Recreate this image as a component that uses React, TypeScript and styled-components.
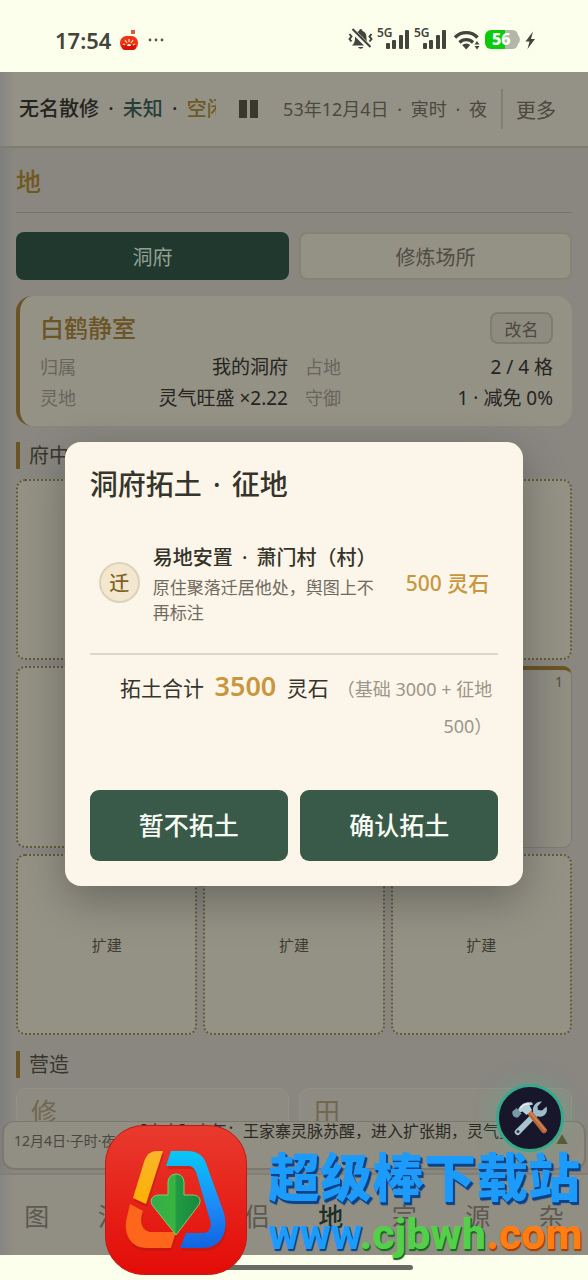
import React from "react";
import styled, { createGlobalStyle } from "styled-components";

const GlobalStyle = createGlobalStyle`
  * { box-sizing: border-box; }
  body {
    margin: 0;
    background: #fdffed;
    font-family: "Noto Sans", "Noto Sans CJK SC", sans-serif;
    text-spacing-trim: space-all;
  }
  button { font-family: inherit; cursor: pointer; padding: 0; }
  h1, h2, h3, p, dl, dd, dt { margin: 0; font-weight: inherit; }
`;

const Page = styled.div`
  position: relative;
  display: flex;
  flex-direction: column;
  height: 100vh;
  overflow: hidden;
`;

/* ---------- phone status bar ---------- */

const StatusBar = styled.div`
  flex: none;
  display: flex;
  align-items: center;
  justify-content: space-between;
  height: 72px;
  padding: 8px 52px 0 55px;
  color: #43443c;
`;

const StatusGroup = styled.div`
  display: flex;
  align-items: center;
  gap: 8px;
`;

const Clock = styled.span`
  font-size: 22px;
  font-weight: 600;
  line-height: 28px;
`;

const StatusIcons = styled.svg`
  display: block;
  width: 190px;
  height: 32px;
`;

/* ---------- game shell ---------- */

const Game = styled.main`
  position: relative;
  flex: 1;
  min-height: 0;
  display: flex;
  flex-direction: column;
  background: linear-gradient(90deg, #7f7f7d 0, #898780 14px, #898780 100%);
`;

const Header = styled.header`
  flex: none;
  display: flex;
  align-items: center;
  height: 76px;
  padding: 0 32px 0 19px;
  background: linear-gradient(90deg, #858583 0, #949186 14px);
  border-bottom: 2px solid #7f7c73;
  font-size: 20px;
  line-height: 28px;
  white-space: nowrap;
`;

const Identity = styled.div`
  flex: 1;
  overflow: hidden;
  color: #24241e;
  font-weight: 500;
`;

const Tint = styled.span<{ $color: string }>`
  color: ${(p) => p.$color};
`;

const Dot = styled.span`
  margin: 0 4px;
  &::before { content: "·"; }
`;

const PauseButton = styled.button`
  display: flex;
  gap: 3px;
  margin: 0 25px 0 23px;
  border: 0;
  background: none;
`;

const PauseStripe = styled.span`
  width: 8px;
  height: 18px;
  background: #3a382c;
`;

const DateText = styled.div`
  color: #4b493f;
  font-size: 18px;
`;

const MoreButton = styled.button`
  height: 40px;
  margin-left: 14px;
  padding-left: 13px;
  border: 0;
  border-left: 2px solid #817e74;
  background: none;
  color: #4b493f;
  font-size: 20px;
`;

const Content = styled.div`
  flex: 1;
  min-height: 0;
  overflow: hidden;
  padding: 0 16px;
`;

const PageTitle = styled.h1`
  height: 65px;
  padding-top: 15px;
  border-bottom: 1px solid #76746d;
  color: #71581f;
  font-size: 25px;
  font-weight: 500;
  line-height: 36px;
`;

const Pair = styled.div`
  display: grid;
  grid-template-columns: 1fr 1fr;
  gap: 10px;
`;

const Tabs = styled(Pair)`
  margin: 19px 0 16px;
`;

const Tab = styled.button<{ $active?: boolean }>`
  height: 48px;
  border: ${(p) => (p.$active ? "0" : "2px solid #868373")};
  border-radius: 8px;
  background: ${(p) => (p.$active ? "#21382e" : "#949185")};
  color: ${(p) => (p.$active ? "#92a095" : "#504c42")};
  font-size: 20px;
`;

const HomeCard = styled.section`
  padding: 14px 19px 12px 20px;
  border-left: 4px solid #6a5424;
  border-radius: 16px;
  background: #949185;
`;

const HomeHead = styled.div`
  display: flex;
  align-items: center;
  justify-content: space-between;
  height: 36px;
  margin-bottom: 6px;
`;

const HomeName = styled.h2`
  color: #6b5426;
  font-size: 24px;
  font-weight: 500;
  line-height: 36px;
`;

const RenameButton = styled.button`
  width: 63px;
  height: 32px;
  border: 2px solid #7f7c70;
  border-radius: 8px;
  background: #8e8b80;
  color: #4c493f;
  font-size: 17px;
`;

const Facts = styled.dl`
  display: grid;
  grid-template-columns: 1fr 1fr;
  column-gap: 17px;
`;

const Fact = styled.div`
  display: flex;
  justify-content: space-between;
  line-height: 31px;
  white-space: nowrap;
  dt { color: #68655c; font-size: 18px; }
  dd { color: #25241f; font-size: 19px; }
`;

const SectionTitle = styled.h2`
  height: 27px;
  margin: 16px 0 10px;
  padding-left: 9px;
  border-left: 4px solid #6a5424;
  color: #38362d;
  font-size: 20px;
  line-height: 27px;
`;

const Plots = styled.div`
  display: grid;
  grid-template-columns: repeat(3, 1fr);
  gap: 6px;
`;

const Plot = styled.button`
  aspect-ratio: 1;
  border: 2px dotted #625a38;
  border-radius: 9px;
  background: #949185;
  color: #3f3c33;
  font-size: 15px;
`;

const BuiltPlot = styled.button`
  display: flex;
  justify-content: flex-end;
  aspect-ratio: 1;
  padding: 2px 8px;
  border: 1px solid #7c796d;
  border-top: 4px solid #6a5424;
  border-radius: 9px;
  background: linear-gradient(90deg, #85847f 60%, #929083);
  color: #504d44;
  font-size: 14px;
  line-height: 20px;
`;

const BuildCard = styled.button`
  display: flex;
  align-items: flex-start;
  height: 90px;
  padding: 6px 14px;
  border: 1px solid #949186;
  border-radius: 10px;
  background: #8d8b82;
  color: #70684f;
  font-size: 26px;
  line-height: 34px;
`;

/* ---------- event log and bottom navigation ---------- */

const EventLog = styled.div`
  flex: none;
  display: flex;
  height: 49px;
  margin: 0 2px;
  padding: 0 16px 0 10px;
  overflow: hidden;
  border: 2px solid #7b786e;
  border-top-width: 1px;
  border-radius: 12px;
  background: #918e83;
  white-space: nowrap;
`;

const LogTime = styled.span`
  width: 117px;
  overflow: hidden;
  color: #4a473f;
  font-size: 14px;
  line-height: 38px;
`;

const LogText = styled.span`
  flex: 1;
  overflow: hidden;
  color: #2b2a24;
  font-size: 16px;
  line-height: 18px;
`;

const LogArrow = styled.span`
  width: 12px;
  color: #5c5228;
  font-size: 12px;
  line-height: 38px;
`;

const Nav = styled.nav`
  flex: none;
  display: grid;
  grid-template-columns: repeat(8, 1fr);
  height: 82px;
  margin-top: 3px;
  border-top: 2px solid #827f75;
  background: linear-gradient(90deg, #858583 0, #918e84 14px);
`;

const NavItem = styled.button<{ $active?: boolean }>`
  border: 0;
  background: none;
  color: ${(p) => (p.$active ? "#1c3027" : "#5c594f")};
  font-size: 25px;
  font-weight: ${(p) => (p.$active ? 500 : 400)};
`;

const HomeStrip = styled.div`
  flex: none;
  display: flex;
  justify-content: center;
  align-items: center;
  height: 25px;
`;

const HomeIndicator = styled.div`
  width: 238px;
  height: 5px;
  border-radius: 3px;
  background: #6a6b64;
`;

/* ---------- dialog ---------- */

const Overlay = styled.div`
  position: absolute;
  inset: 0;
  display: flex;
  align-items: center;
  justify-content: center;
`;

const Dialog = styled.section`
  width: 78%;
  padding: 24px 25px 25px;
  border-radius: 16px;
  background: #fcf5e9;
  box-shadow: 0 14px 44px rgba(0, 0, 0, 0.28);
  color: #36352b;
`;

const DialogTitle = styled.h2`
  font-size: 28px;
  font-weight: 500;
  line-height: 36px;
`;

const CostRow = styled.div`
  display: flex;
  align-items: center;
  gap: 13px;
  margin-top: 15px;
  padding: 24px 9px 28px;
  border-bottom: 2px solid #ddd6c8;
`;

const Badge = styled.span`
  flex: none;
  display: grid;
  place-items: center;
  width: 41px;
  height: 41px;
  border: 2px solid #dcd2b9;
  border-radius: 50%;
  background: #f3e8cf;
  color: #806124;
  font-size: 20px;
  font-weight: 500;
`;

const CostText = styled.div`
  flex: 1;
`;

const CostName = styled.h3`
  color: #34332a;
  font-size: 20px;
  font-weight: 500;
  line-height: 34px;
`;

const CostNote = styled.p`
  color: #706a60;
  font-size: 17px;
  line-height: 25px;
`;

const Price = styled.strong`
  margin-left: 10px;
  color: #c8973d;
  font-size: 21px;
  font-weight: 500;
  line-height: 28px;
  white-space: nowrap;
`;

const Total = styled.p`
  padding: 13px 6px 46px;
  font-size: 21px;
  line-height: 36px;
  text-align: right;
`;

const TotalSum = styled.strong`
  margin: 0 5px;
  color: #c8973d;
  font-size: 27px;
  font-weight: 600;
`;

const TotalNote = styled.span`
  margin-left: 8px;
  color: #9b958b;
  font-size: 18px;
`;

const Actions = styled.div`
  display: grid;
  grid-template-columns: 1fr 1fr;
  gap: 12px;
`;

const Action = styled.button`
  height: 71px;
  padding-bottom: 3px;
  border: 0;
  border-radius: 9px;
  background: #395a49;
  color: #f8fcf4;
  font-size: 25px;
  font-weight: 500;
`;

/* ---------- floating pieces ---------- */

const ToolButton = styled.button`
  position: absolute;
  right: 24px;
  bottom: 103px;
  width: 68px;
  height: 68px;
  border: 3px solid #35a98a;
  border-radius: 50%;
  background: #18162b;
  box-shadow: 0 0 24px rgba(70, 190, 150, 0.35);
  svg { display: block; margin: auto; }
`;

const Promo = styled.a`
  position: absolute;
  left: 105px;
  bottom: 5px;
  display: flex;
  gap: 21px;
  text-decoration: none;
  white-space: nowrap;
  svg { display: block; }
`;

const PromoText = styled.span`
  display: flex;
  flex-direction: column;
  padding-top: 20px;
  font-family: "Noto Sans CJK SC", sans-serif;
  font-weight: 900;
`;

const PromoName = styled.span`
  color: #1c9bfb;
  font-size: 52px;
  line-height: 60px;
  text-shadow: 1px 2px 0 #0b4187, 2px 3px 1px #0b4187;
`;

const PromoUrl = styled.span`
  font-family: Roboto, sans-serif;
  font-size: 43px;
  font-weight: 800;
  line-height: 58px;
`;

const UrlPart = styled.span<{ $color: string; $edge: string }>`
  color: ${(p) => p.$color};
  text-shadow: 1px 1px 0 ${(p) => p.$edge}, 1px 2px 1px ${(p) => p.$edge};
`;

const FruitIcon = () => (
  <svg width="20" height="22" viewBox="0 0 20 22" aria-hidden="true">
    <rect x="12" y="1" width="4" height="4" fill="#dd5a3a" />
    <rect x="1" y="7" width="18" height="14" rx="6.500" fill="#f2330f" />
    <path d="M3 16h14v2a3 3 0 0 1-3 3H6a3 3 0 0 1-3-3z" fill="#d5150b" />
    <path d="M4 15l2 1M6 11l2 3M10 10v3M14 11l-2 3M16 15l-2 1" stroke="#ffd9c0" strokeWidth="1.300" />
    <path d="M8 17a2 2 0 0 1 4 0z" fill="#fff0e4" />
  </svg>
);

const DotsIcon = () => (
  <svg width="18" height="4" viewBox="0 0 18 4" fill="#55564d" aria-hidden="true">
    <circle cx="3" cy="2" r="1.400" />
    <circle cx="9" cy="2" r="1.400" />
    <circle cx="15" cy="2" r="1.400" />
  </svg>
);

const Signal = ({ x }: { x: number }) => (
  <g>
    <text x={x} y="13" fontSize="12" fontWeight="600">5G</text>
    <rect x={x + 9} y="19" width="4" height="6" rx="1" />
    <rect x={x + 15} y="16" width="4" height="9" rx="1" />
    <rect x={x + 22} y="11" width="4" height="14" rx="1" />
    <rect x={x + 28} y="6" width="4" height="19" rx="1" />
  </g>
);

const SystemIcons = () => (
  <StatusIcons viewBox="0 0 190 32" fill="#43443c" role="img" aria-label="56%">
    <g transform="translate(2 -1)">
      <path d="M12.500 6a2 2 0 0 1 2 2c3 1 4 3.500 4 7 0 4 1 5.500 3 7.500H4c2-2 3-3.500 3-7.500 0-3.500 1-6 4-7a2 2 0 0 1 1.500-2zM10 24h5.500a3 3 0 0 1-5.500 0z" />
      <path d="M3.500 6.500l18 18" stroke="#fdffed" strokeWidth="5" />
      <path d="M4.500 6l18 18" stroke="#43443c" strokeWidth="2.200" />
      <path d="M1.500 11l2 2.500-2 2.500 2 2.500M23.500 11l-2 2.500 2 2.500-2 2.500" fill="none" stroke="#43443c" strokeWidth="2" />
    </g>
    <Signal x={31} />
    <Signal x={68} />
    <g fill="none" stroke="#43443c">
      <path d="M109 13.500a15.500 15.500 0 0 1 22.500 0" strokeWidth="3.400" />
      <path d="M113.500 18.500a9.500 9.500 0 0 1 13.500 0" strokeWidth="3.200" />
    </g>
    <path d="M120.200 25.500l-4-4.500a6 6 0 0 1 8 0z" />
    <path d="M131 17l2.500 3.500h-5zM131 25.500l2.500-3.500h-5z" />
    <path d="M145 6h14v19h-14a6 6 0 0 1-6-6v-7a6 6 0 0 1 6-6z" fill="#0ccb0b" />
    <path d="M159 6h7a6 6 0 0 1 6 5q4 4.500 0 9a6 6 0 0 1-6 5h-7z" fill="#b3b6a9" />
    <text x="146" y="21" fontSize="16" fontWeight="800" fill="#ffffff">56</text>
    <path d="M187 7.500l-7.500 10h4l-2 7.500 7.500-10h-4z" />
  </StatusIcons>
);

const ToolsIcon = () => (
  <svg width="38" height="38" viewBox="0 0 38 38" aria-hidden="true">
    <path d="M4.500 31L24 11.500l4 4L9 35a3 3 0 0 1-4.500-4z" fill="#a9c4cf" />
    <path d="M31 2.500l-4.500 5 .5 3.500 4 .5 4.500-4c1.500 4.500-.5 9-5 10-4 1-8-1.500-8.500-5.500-.7-5 3.500-10 9-9.500z" fill="#9dbcc8" />
    <circle cx="7" cy="32.500" r="1.500" fill="#2b3a48" />
    <path d="M16 14.500l4-3.500 16 19.500c1 1.500-2.500 5-4.500 3.500z" fill="#b8693b" />
    <path d="M19 13l15 18" stroke="#d58a55" strokeWidth="1.200" />
    <path d="M7 11c3-6.500 8-8.500 14-7.500l1 2-3.500 1 2.500 4.500-5.500 5-4-3.500-3 1z" fill="#b7d0d9" />
    <path d="M1.500 12.500l4-3.500 5 5.500-3.500 4c-4 .5-6.500-2.500-5.500-6z" fill="#7799a8" />
    <path d="M9 9.500c2-3 5-4.500 9-4.500" stroke="#e4f1f4" strokeWidth="1.300" fill="none" />
  </svg>
);

const GOLD = "M58 26h-6c-8 0-11 5-13 11L28 73l13 6z";
const BLUE = "M66 26h16c10 0 16 4 19 12l18 50c5 17-2 35-21 35H75l6-15h16c8 0 10-6 8-13L91 47c-2-4-4-6-8-6H61z";
const ORANGE = "M25 79l13 7c-4 11-1 21 9 21h24l-5 16H42c-18 0-24-16-20-31z";

const PromoLogo = () => (
  <svg width="142" height="150" viewBox="0 0 142 150" aria-hidden="true">
    <defs>
      <linearGradient id="red" x1="0" y1="0" x2="0" y2="1">
        <stop offset="0" stopColor="#e93a2e" />
        <stop offset="1" stopColor="#e30c07" />
      </linearGradient>
      <linearGradient id="blue" x1="0" y1="0" x2="0" y2="1">
        <stop offset="0" stopColor="#06c8f6" />
        <stop offset="0.550" stopColor="#1c8cf8" />
        <stop offset="1" stopColor="#1263e0" />
      </linearGradient>
      <linearGradient id="green" x1="0" y1="0" x2="1" y2="0">
        <stop offset="0" stopColor="#30ae4c" />
        <stop offset="0.480" stopColor="#3ab43f" />
        <stop offset="0.520" stopColor="#219a44" />
        <stop offset="1" stopColor="#188a3d" />
      </linearGradient>
      <linearGradient id="gold" x1="0" y1="0" x2="0" y2="1">
        <stop offset="0" stopColor="#f9b52b" />
        <stop offset="1" stopColor="#fdb002" />
      </linearGradient>
    </defs>
    <rect x="0.500" y="0.500" width="141" height="149" rx="38" fill="url(#red)" stroke="#c41711" />
    <g fill="#a81812" fillOpacity="0.400" transform="translate(1 3)">
      <path d={GOLD} />
      <path d={BLUE} />
      <path d={ORANGE} />
    </g>
    <path d={GOLD} fill="url(#gold)" />
    <path d={BLUE} fill="url(#blue)" />
    <path d={ORANGE} fill="#fd661b" />
    <path d="M63 57a8 8 0 0 1 16 0v13h9c7 0 9 6 5 11L71 110 48 81c-4-5-1-11 6-11h9z" fill="url(#green)" stroke="#7fcc74" strokeWidth="1" />
  </svg>
);

const NAV = ["图", "法", "财", "侣", "地", "宗", "源", "杂"];

const FACTS = [
  ["归属", "我的洞府"],
  ["占地", "2 / 4 格"],
  ["灵地", "灵气旺盛 ×2.22"],
  ["守御", "1 · 减免 0%"],
];

export default function App() {
  return (
    <Page lang="zh-CN">
      <GlobalStyle />
      <StatusBar>
        <StatusGroup>
          <Clock>17:54</Clock>
          <FruitIcon />
          <DotsIcon />
        </StatusGroup>
        <SystemIcons />
      </StatusBar>

      <Game>
        <Header>
          <Identity>
            无名散修 <Dot /> <Tint $color="#263f39">未知</Tint> <Dot />{" "}
            <Tint $color="#6d5a26">空闲</Tint>
          </Identity>
          <PauseButton aria-label="暂停">
            <PauseStripe />
            <PauseStripe />
          </PauseButton>
          <DateText>
            53年12月4日 <Dot /> 寅时 <Dot /> 夜
          </DateText>
          <MoreButton>更多</MoreButton>
        </Header>

        <Content>
          <PageTitle>地</PageTitle>
          <Tabs>
            <Tab $active>洞府</Tab>
            <Tab>修炼场所</Tab>
          </Tabs>

          <HomeCard>
            <HomeHead>
              <HomeName>白鹤静室</HomeName>
              <RenameButton>改名</RenameButton>
            </HomeHead>
            <Facts>
              {FACTS.map(([label, value]) => (
                <Fact key={label}>
                  <dt>{label}</dt>
                  <dd>{value}</dd>
                </Fact>
              ))}
            </Facts>
          </HomeCard>

          <SectionTitle>府中</SectionTitle>
          <Plots>
            <Plot aria-label="空地" />
            <Plot aria-label="空地" />
            <Plot aria-label="空地" />
            <Plot aria-label="空地" />
            <Plot aria-label="空地" />
            <BuiltPlot>1</BuiltPlot>
            <Plot>扩建</Plot>
            <Plot>扩建</Plot>
            <Plot>扩建</Plot>
          </Plots>

          <SectionTitle>营造</SectionTitle>
          <Pair>
            <BuildCard>修</BuildCard>
            <BuildCard>田</BuildCard>
          </Pair>
        </Content>

        <EventLog>
          <LogTime>12月4日·子时·夜</LogTime>
          <LogText>【大事】本年：王家寨灵脉苏醒，进入扩张期，灵气复苏</LogText>
          <LogArrow>▲</LogArrow>
        </EventLog>
        <Nav>
          {NAV.map((name) => (
            <NavItem key={name} $active={name === "地"}>
              {name}
            </NavItem>
          ))}
        </Nav>

        <Overlay>
          <Dialog role="dialog" aria-modal="true" aria-labelledby="dialog-title">
            <DialogTitle id="dialog-title">
              洞府拓土 <Dot /> 征地
            </DialogTitle>
            <CostRow>
              <Badge>迁</Badge>
              <CostText>
                <CostName>
                  易地安置 <Dot /> 萧门村（村）
                </CostName>
                <CostNote>原住聚落迁居他处，舆图上不再标注</CostNote>
              </CostText>
              <Price>500 灵石</Price>
            </CostRow>
            <Total>
              拓土合计 <TotalSum>3500</TotalSum> 灵石
              <TotalNote>（基础 3000 + 征地 500）</TotalNote>
            </Total>
            <Actions>
              <Action>暂不拓土</Action>
              <Action>确认拓土</Action>
            </Actions>
          </Dialog>
        </Overlay>

        <ToolButton aria-label="工具">
          <ToolsIcon />
        </ToolButton>
      </Game>

      <HomeStrip>
        <HomeIndicator />
      </HomeStrip>

      <Promo href="#">
        <PromoLogo />
        <PromoText>
          <PromoName>超级棒下载站</PromoName>
          <PromoUrl>
            <UrlPart $color="#1c9bfb" $edge="#0b4187">www</UrlPart>
            <UrlPart $color="#52d04c" $edge="#17691c">.cjbwh</UrlPart>
            <UrlPart $color="#ff7d12" $edge="#a33c05">.com</UrlPart>
          </PromoUrl>
        </PromoText>
      </Promo>
    </Page>
  );
}
